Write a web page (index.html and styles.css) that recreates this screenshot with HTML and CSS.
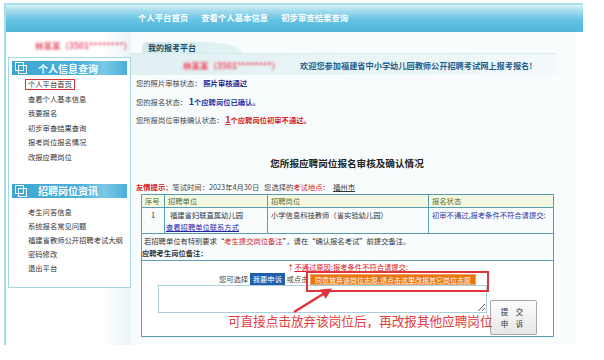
FILE: index.html
```html
<!DOCTYPE html>
<html lang="zh-CN">
<head>
  <meta charset="UTF-8">
  <title>我的报考平台</title>
  <link rel="stylesheet" href="styles.css">
</head>
<body>
  <div class="frame">
    <div class="banner">
      <a class="topnav">个人平台首页</a>
      <a class="topnav">查看个人基本信息</a>
      <a class="topnav">初步审查结果查询</a>
    </div>

    <div class="main">
      <aside class="side">
        <div class="who"><span class="blur">林某某（3501********）</span></div>
        <div class="menu">
          <div class="menu-head">
            <svg class="menu-icon" width="12" height="12" viewBox="0 0 12 12"><rect x="0.5" y="0.5" width="8" height="8" fill="none" stroke="#fff"/><rect x="3.5" y="3.5" width="8" height="8" fill="none" stroke="#fff"/></svg>
            个人信息查询
          </div>
          <ul class="menu-list">
            <li><a class="current">个人平台首页</a></li>
            <li><a>查看个人基本信息</a></li>
            <li><a>我要报名</a></li>
            <li><a>初步审查结果查询</a></li>
            <li><a>报考岗位报名情况</a></li>
            <li><a>改报应聘岗位</a></li>
          </ul>
          <div class="menu-head second">
            <svg class="menu-icon" width="12" height="12" viewBox="0 0 12 12"><rect x="0.5" y="0.5" width="8" height="8" fill="none" stroke="#fff"/><rect x="3.5" y="3.5" width="8" height="8" fill="none" stroke="#fff"/></svg>
            招聘岗位资讯
          </div>
          <ul class="menu-list second">
            <li><a>考生问答信息</a></li>
            <li><a>系统报名常见问题</a></li>
            <li><a>福建省教师公开招聘考试大纲</a></li>
            <li><a>密码修改</a></li>
            <li><a>退出平台</a></li>
          </ul>
        </div>
      </aside>

      <section class="content">
        <div class="tabbar"><span class="tab">我的报考平台</span></div>
        <div class="welcome">
          <span class="blur name">林某某（3501********）</span>
          <b>欢迎您参加福建省中小学幼儿园教师公开招聘考试网上报考报名!</b>
        </div>

        <div class="status">
          <p>您的照片审核状态： <b class="navy">照片审核通过</b></p>
          <p>您的报名状态： <b class="blue"><span class="num">1</span>个应聘岗位已确认。</b></p>
          <p>您所报岗位审核确认状态： <b class="red"><span class="num u">1</span>个应聘岗位初审不通过。</b></p>
        </div>

        <h2 class="title">您所报应聘岗位报名审核及确认情况</h2>

        <p class="tip">
          <b class="red">友情提示：</b>笔试时间：2023年4月30日&nbsp;&nbsp;&nbsp;您选择的<span class="red">考试地点：</span>&nbsp;&nbsp;<u>福州市</u>
        </p>

        <table class="grid">
          <colgroup>
            <col style="width:23px"><col style="width:103px"><col style="width:161px"><col style="width:125px">
          </colgroup>
          <tr class="head">
            <td>序号</td><td>招聘单位</td><td>招聘岗位</td><td>报名状态</td>
          </tr>
          <tr class="row">
            <td class="center">1</td>
            <td><span class="unit">福建省妇联直属幼儿园</span><br><a class="link">查看招聘单位联系方式</a></td>
            <td>小学信息科技教师（省实验幼儿园）</td>
            <td class="blue">初审不通过,报考条件不符合请提交:</td>
          </tr>
          <tr>
            <td colspan="4" class="notes">
              <div class="note-line">若招聘单位有特别要求“<span class="red">考生提交岗位备注</span>”，请在“确认报名考试”前提交备注。</div>
              <div class="note-title">应聘考生岗位备注：</div>
            </td>
          </tr>
          <tr>
            <td colspan="4" class="appeal">
              <div class="reason"><span class="red">↑</span><u class="red">不通过原因:报考条件不符合请提交:</u></div>
              <div class="choose">
                您可选择 <span class="btn-blue">我要申诉</span> 或点击 <span class="btn-orange">同意放弃该岗位志愿,请点击这里改报其它岗位志愿</span>
              </div>
              <div class="appeal-row">
                <textarea class="appeal-text"></textarea>
                <button class="submit">提 交<br>申 诉</button>
              </div>

              <span class="mark-box"></span>
              <svg class="mark-arrow" width="412" height="76" viewBox="0 0 412 76">
                <line x1="152" y1="51" x2="182" y2="32.5" stroke="#e0353b" stroke-width="2.6"/>
                <polygon points="190,27.5 183.8,37.8 177.9,28.6" fill="#e0353b"/>
              </svg>
              <span class="mark-text">可直接点击放弃该岗位后，再改报其他应聘岗位</span>
            </td>
          </tr>
        </table>
      </section>
    </div>
  </div>
</body>
</html>
```

FILE: styles.css
```css
* {
  box-sizing: border-box;
}
body {
  margin: 0;
  background: #fff;
  font-family: "Noto Sans CJK SC", "Noto Sans", sans-serif;
  font-size: 7.3px;
  color: #333;
}
p {
  margin: 0;
}
.frame {
  margin: 3px 0 0 4px;
  width: 579px;
  border-top: 2px solid #a8dfe9;
  border-left: 2px solid #a8dfe9;
}
.banner {
  height: 27px;
  display: flex;
  align-items: center;
  gap: 13px;
  padding: 0 0 3px 132px;
  background: linear-gradient(#d9f2f8 0, #a3dbee 22%, #66c2e2 55%, #4fb6db 100%);
}
.topnav {
  color: #fff;
  font-size: 8.4px;
  font-weight: bold;
}
.main {
  display: flex;
  min-height: 313px;
}

/* left column */
.side {
  width: 125px;
  padding-left: 2px;
  background: linear-gradient(to right, #fff 75%, #eaf5f8);
}
.who {
  height: 25px;
  display: flex;
  align-items: center;
  padding-left: 27px;
}
.blur {
  color: #e9556d;
  font-size: 8.5px;
  font-weight: bold;
  filter: blur(1.3px);
  white-space: nowrap;
}
.menu {
  width: 123px;
  border: 1px solid #a5d6e2;
  padding: 3px 3px 12px;
  background: #fff;
}
.menu-head {
  height: 14px;
  display: flex;
  align-items: center;
  padding-left: 3px;
  gap: 11px;
  color: #fff;
  font-size: 10px;
  font-weight: bold;
  background: linear-gradient(to right, #3ea5d2 0, #4cb0da 60%, #7cc8e6 80%, #4aaed8 100%);
}
.menu-head.second {
  margin-top: 19px;
}
.menu-icon {
  flex: none;
}
.menu-list {
  list-style: none;
  margin: 0;
  padding: 2px 0 0 16px;
  line-height: 14.6px;
}
.menu-list.second {
  padding-top: 7px;
  line-height: 14px;
}
.menu-list a {
  color: #333;
}
.menu-list a.current {
  display: inline-block;
  line-height: 9px;
  padding: 0 2px;
  margin-left: -3px;
  border: 1px solid #d9363c;
}

/* right column */
.content {
  width: 444px;
  background: #f9fcfd;
}
.tabbar {
  width: 426px;
  height: 22px;
  padding: 10px 0 0 11px;
  border-bottom: 1px solid #d8ecee;
}
.tab {
  display: block;
  width: 100px;
  height: 11px;
  padding-left: 6px;
  line-height: 11px;
  font-size: 8px;
  font-weight: bold;
  color: #1f4a63;
  background: linear-gradient(to right, #d3ebee, #e4f3f4);
  border-radius: 5px 40px 0 0 / 5px 11px 0 0;
}
.welcome {
  width: 426px;
  height: 21px;
  display: flex;
  align-items: center;
  padding-left: 52px;
  gap: 20px;
  background: linear-gradient(to right, #e1f0f3, #ecf6f7 70%, #f4fafb);
}
.welcome .blur {
  color: #f0485e;
}
.welcome b {
  font-size: 8.2px;
  color: #1f5d8c;
}
.status {
  margin-top: -1px;
  padding-left: 5px;
  line-height: 18.5px;
  color: #444;
}
.navy {
  color: #25258f;
}
.blue {
  color: #2535a8;
}
.red {
  color: #d42020;
}
.num {
  font-size: 9px;
}
.u {
  text-decoration: underline;
}
.title {
  margin: 26px 0 0 10px;
  width: 412px;
  text-align: center;
  line-height: 14px;
  font-size: 9.6px;
  color: #222;
}
.tip {
  margin-top: 11.5px;
  padding-left: 5px;
  line-height: 12px;
  color: #444;
}
.tip u {
  color: #333;
}

/* table */
.grid {
  margin: 1px 0 0 10px;
  width: 412px;
  table-layout: fixed;
  border-collapse: collapse;
  border: 1px solid #5a9db2;
}
.grid td {
  border: 1px solid #5a9db2;
  vertical-align: top;
  padding: 0 3px;
}
.head td {
  height: 13px;
  line-height: 12px;
  background: #f3f8e2;
  color: #5e6e2c;
}
.row td {
  height: 26px;
  line-height: 12px;
  padding-top: 1px;
}
.row td.center {
  text-align: center;
}
.unit {
  padding-left: 2px;
}
.link {
  margin-left: -2px;
  color: #2424a6;
  text-decoration: underline;
}
.notes {
  line-height: 12px;
  padding: 1px 0 1px 0 !important;
  border-bottom: 1px solid #5a9db2;
}
.note-line {
  padding-left: 2px;
}
.note-title {
  font-weight: bold;
  color: #333;
}
.appeal {
  position: relative;
  height: 76px;
  text-align: center;
  padding: 1px 0 0 !important;
  background: #fff;
}
.reason {
  line-height: 11px;
}
.choose {
  line-height: 13px;
  color: #444;
}
.btn-blue {
  display: inline-block;
  height: 13px;
  padding: 0 3px;
  background: #1f5fae;
  color: #fff;
  vertical-align: top;
}
.btn-orange {
  display: inline-block;
  height: 11px;
  margin-top: 1px;
  padding: 0 4px;
  line-height: 10px;
  font-size: 7px;
  background: #ea750f;
  border: 1px solid #f5a35c;
  color: #fff;
  vertical-align: top;
}
.appeal-row {
  display: flex;
  justify-content: center;
  align-items: flex-start;
  gap: 3px;
  margin-top: -1px;
}
.appeal-text {
  width: 329px;
  height: 28px;
  margin: 0;
  border: 1px solid #a9cfdc;
  background: #fff;
}
.submit {
  width: 47px;
  height: 35px;
  margin-top: 15px;
  padding: 0;
  font-family: inherit;
  font-size: 7.5px;
  line-height: 12px;
  letter-spacing: 3px;
  color: #333;
  background: linear-gradient(#fdfdfd, #e6e6e6);
  border: 1px solid #a8a8a8;
  border-radius: 2px;
}

/* annotation laid over the screenshot */
.mark-box {
  position: absolute;
  left: 164px;
  top: 10px;
  width: 183px;
  height: 21px;
  border: 2px solid #e0353b;
}
.mark-arrow {
  position: absolute;
  left: 0;
  top: 0;
  pointer-events: none;
}
.mark-text {
  position: absolute;
  left: 86px;
  top: 53px;
  font-size: 12.6px;
  line-height: 14px;
  color: #e23b40;
  white-space: nowrap;
}
```
